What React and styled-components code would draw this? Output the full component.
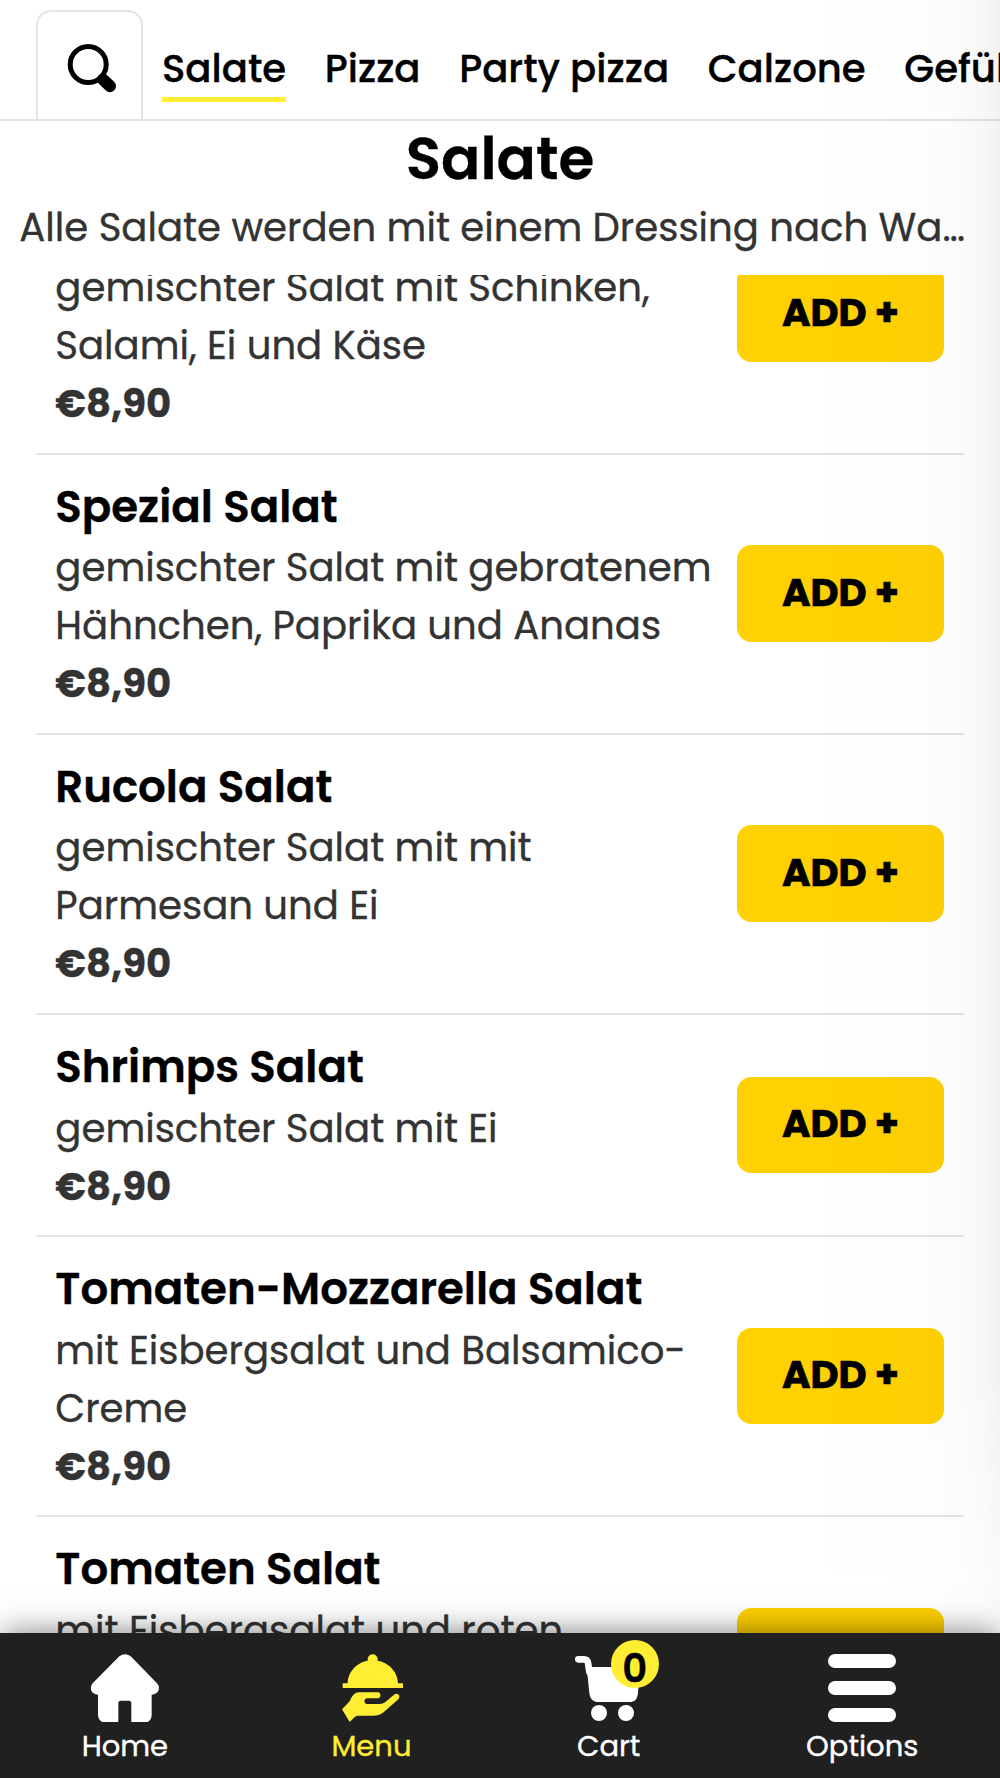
import styled, { createGlobalStyle } from 'styled-components'


const GlobalStyle = createGlobalStyle`
* {
box-sizing: border-box;
}
body {
margin: 0;
background-color: #ffffff;
font-family: Poppins, Inter, "Liberation Sans", sans-serif;
font-feature-settings: "cv11";
-webkit-text-stroke: 0.35px currentColor;
overflow: hidden;
}
`

const StyledPage = styled.div`
position: relative;
display: flex;
flex-flow: column nowrap;
width: 1000px;
height: 1778px;
overflow: hidden;
`

const StyledTopBar = styled.div`
display: flex;
align-items: flex-end;
flex-shrink: 0;
height: 120.5px;
padding-left: 36px;
border-bottom: 2px solid #e4e4e4;
white-space: nowrap;
overflow: hidden;
`

const SearchTab = styled.button`
display: flex;
align-items: center;
justify-content: center;
flex-shrink: 0;
width: 107px;
height: 109px;
padding: 5px 0 0 4px;
margin-right: 19px;
border: 2px solid #e4e4e4;
border-bottom: none;
border-radius: 15px 15px 0 0;
background-color: #ffffff;
`

const Categories = styled.nav`
display: flex;
gap: 38.6px;
margin-bottom: 17px;
`

const Category = styled.a`
flex-shrink: 0;
height: 63px;
font-size: 38.65px;
font-weight: 500;
line-height: 59px;
color: #000000;
border-bottom: 5px solid ${props => props.$active ? '#ffee33' : 'transparent'};
`

const Header = styled.h1`
flex-shrink: 0;
margin: 0;
font-size: 58px;
font-weight: 600;
line-height: 76px;
text-align: center;
`

const Description = styled.p`
flex-shrink: 0;
height: 78.5px;
margin: 0;
padding-left: 19.3px;
font-size: 38.65px;
line-height: 61px;
color: #333333;
white-space: nowrap;
`

const StyledList = styled.div`
flex: 1;
min-height: 0;
padding: 0 36px;
overflow: hidden;
`

// the list stands scrolled a little way down
const Scrolled = styled.div`
margin-top: -100.5px;
`

const StyledItem = styled.div`
display: flex;
align-items: center;
justify-content: space-between;
padding: 19.3px 20px 19.3px 19.3px;
border-bottom: 2px solid #e4e4e4;
`

const ItemName = styled.h2`
margin: 0;
font-size: 43.5px;
font-weight: 600;
line-height: 65.5px;
white-space: nowrap;
`

const ItemLine = styled.div`
font-size: 38.65px;
line-height: 58px;
color: #333333;
white-space: nowrap;
`

const Price = styled.div`
font-size: 38.65px;
font-weight: 700;
line-height: 58px;
color: #333333;
`

const AddButton = styled.button`
flex-shrink: 0;
width: 207px;
height: 96.6px;
padding: 0 0 2px;
border: none;
border-radius: 14.5px;
background-color: #ffd002;
color: #000000;
font-family: inherit;
font-feature-settings: inherit;
font-size: 38.65px;
font-weight: 700;
-webkit-text-stroke: 0.7px currentColor;
`

const StyledBottomNav = styled.nav`
position: relative;
display: flex;
justify-content: space-around;
flex-shrink: 0;
height: 145px;
padding-top: 21px;
background-color: #202020;
box-shadow: 0 -2px 30px -3px rgba(0, 0, 0, 0.55);
`

const NavItem = styled.a`
position: relative;
display: flex;
flex-flow: column nowrap;
align-items: center;
color: ${props => props.$active ? '#ffee33' : '#ffffff'};
font-size: 29px;
line-height: 44px;
white-space: nowrap;
`

const NavIcon = styled.svg`
flex-shrink: 0;
width: 68px;
height: 68px;
margin-bottom: 1.5px;
fill: currentColor;
`

const Badge = styled.span`
position: absolute;
top: -14px;
left: 36px;
width: 48px;
height: 48px;
border-radius: 50%;
background-color: #ffee33;
color: #000000;
font-size: 38.65px;
font-weight: 600;
line-height: 57px;
text-align: center;
`

const SideShade = styled.div`
position: absolute;
top: 0;
right: 0;
width: 200px;
height: 1633px;
pointer-events: none;
background: linear-gradient(to right, rgba(0,0,0,0) 0%, rgba(0,0,0,0.004) 30%, rgba(0,0,0,0.006) 58%, rgba(0,0,0,0.014) 80%, rgba(0,0,0,0.03) 92%, rgba(0,0,0,0.05) 100%);
mask-image: linear-gradient(to bottom, #000 84%, rgba(0,0,0,0.35) 100%);
`


const categories = ['Salate', 'Pizza', 'Party pizza', 'Calzone', 'Gefüllte']

const items = [
    { name: 'Chef Salat', lines: ['gemischter Salat mit Schinken,', 'Salami, Ei und Käse'] },
    { name: 'Spezial Salat', lines: ['gemischter Salat mit gebratenem', 'Hähnchen, Paprika und Ananas'] },
    { name: 'Rucola Salat', lines: ['gemischter Salat mit mit', 'Parmesan und Ei'] },
    { name: 'Shrimps Salat', lines: ['gemischter Salat mit Ei'] },
    { name: 'Tomaten-Mozzarella Salat', lines: ['mit Eisbergsalat und Balsamico-', 'Creme'] },
    { name: 'Tomaten Salat', lines: ['mit Eisbergsalat und roten', 'Zwiebeln'] },
]


const SearchIcon = () => (
    <svg width="50" height="50" viewBox="0 0 50 50">
        <circle cx="21.2" cy="21.5" r="18" fill="none" stroke="#000" strokeWidth="5" />
        <path d="M36 36.5L43 43.2" stroke="#000" strokeWidth="12" strokeLinecap="round" />
    </svg>
)

const Item = ({ item }) => (
    <StyledItem>
        <div>
            <ItemName>{item.name}</ItemName>
            {item.lines.map(line => <ItemLine key={line}>{line}</ItemLine>)}
            <Price>€8,90</Price>
        </div>
        <AddButton>ADD +</AddButton>
    </StyledItem>
)

const BottomNav = () => (
    <StyledBottomNav>
        <NavItem>
            <NavIcon viewBox="272 102 204 204">
                <path d="M357 109Q374 96 391 109L470 190Q478 199 475 210Q470 223 454 224V286Q452 307 432 308H399Q393 308 393 302V250Q393 242 386 242H361Q354 242 354 250V302Q354 308 348 308H315Q295 306 293 286V224Q277 223 272 210Q270 199 277 190Z" />
            </NavIcon>
            Home
        </NavItem>
        <NavItem $active>
            <NavIcon viewBox="20 42 204 204">
                <circle cx="127" cy="58" r="15" />
                <path d="M52 130C53 92 85 61 127 61S202 92 203 130H218V144H37V130Z" />
                <path d="M35 208L58 184C66 166 74 157 86 157H143C153 157 153 175 143 175H110C100 175 100 192 110 192H148C155 192 160 190 165 186L191 164C201 156 213 168 204 178L170 208C155 222 147 227 130 227H86C74 227 72 232 58 246Z" />
            </NavIcon>
            Menu
        </NavItem>
        <NavItem>
            <NavIcon viewBox="45 102 204 204">
                <path d="M55 118H72Q82 118 84 128L88 155" fill="none" stroke="currentColor" strokeWidth="20" strokeLinecap="round" />
                <path d="M80 141H240L234 218C232 238 224 246 208 246H116C99 246 90 237 88 218Z" />
                <circle cx="117" cy="279" r="24" />
                <circle cx="198" cy="279" r="24" />
            </NavIcon>
            Cart
            <Badge>0</Badge>
        </NavItem>
        <NavItem>
            <NavIcon viewBox="0 0 68 68">
                <rect y="0" width="68" height="14" rx="7" />
                <rect y="27" width="68" height="14" rx="7" />
                <rect y="54" width="68" height="14" rx="7" />
            </NavIcon>
            Options
        </NavItem>
    </StyledBottomNav>
)


const App = () => {

    return (<>
        <GlobalStyle />
        <StyledPage>
            <StyledTopBar>
                <SearchTab><SearchIcon /></SearchTab>
                <Categories>
                    {categories.map((name, i) => <Category key={name} $active={i === 0}>{name}</Category>)}
                </Categories>
            </StyledTopBar>
            <Header>Salate</Header>
            <Description>Alle Salate werden mit einem Dressing nach Wa…</Description>
            <StyledList>
                <Scrolled>
                    {items.map(item => <Item key={item.name} item={item} />)}
                </Scrolled>
            </StyledList>
            <SideShade />
            <BottomNav />
        </StyledPage>
    </>)
}

export default App
